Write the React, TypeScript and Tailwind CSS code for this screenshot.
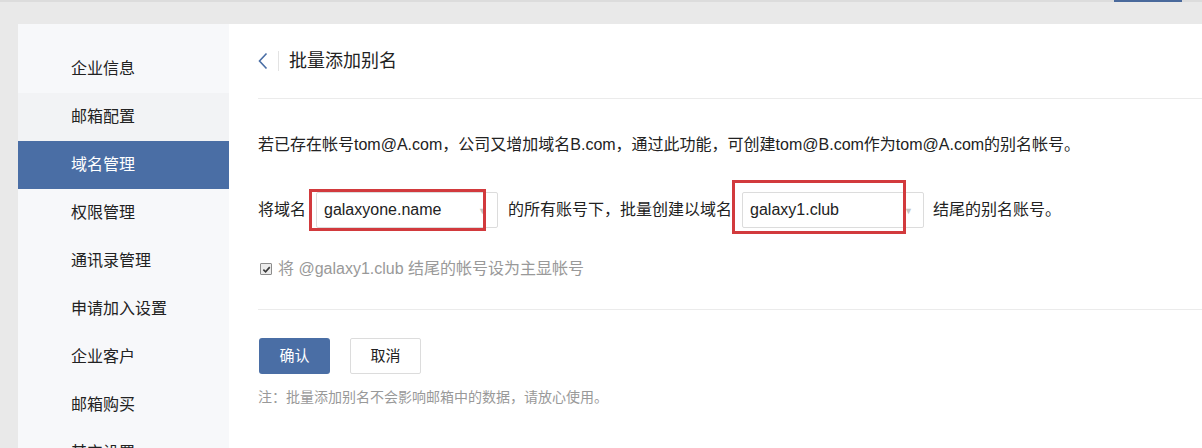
const menu = ['企业信息', '邮箱配置', '域名管理', '权限管理', '通讯录管理', '申请加入设置', '企业客户', '邮箱购买', '其它设置'];

function Select({ value, red }: { value: string; red: string }) {
  return (
    <div className="relative w-[182px] h-[36px] border border-[#dcdcdc] rounded-[2px] bg-white flex items-center pl-[7px]">
      <span className="text-[16px] text-[#222]">{value}</span>
      <span className="absolute right-[10px] top-[12px] text-[9px] text-[#c4c4c4]">▼</span>
      <div className={`absolute border-[3px] border-[#d23a3d] ${red}`} />
    </div>
  );
}

export default function App() {
  return (
    <div
      className="w-[1202px] h-[448px] overflow-hidden bg-[#e9e9e9] text-[#333]"
      style={{ fontFamily: '"Liberation Sans", "Noto Sans CJK SC", sans-serif' }}
    >
      <div className="h-[2px] bg-[#dcdcdc] flex justify-end">
        <div className="w-[68px] h-[2px] bg-[#4a6a9c] mr-[20px]" />
      </div>
      <div className="flex mt-[22px] ml-[18px] h-[430px]">
        {/* sidebar */}
        <div className="w-[211px] bg-[#f7f8fa] pt-[21px]">
          {menu.map((m, i) => (
            <div
              key={m}
              className={`h-[48px] flex items-center pl-[53px] text-[16px] ${
                i === 2 ? 'bg-[#4a6ea5] text-white' : i === 1 ? 'bg-[#f2f3f5] text-[#222]' : 'text-[#222]'
              }`}
            >
              {m}
            </div>
          ))}
        </div>

        {/* content */}
        <div className="flex-1 bg-white pl-[29px]">
          <div className="h-[75px] border-b border-[#ebebeb] flex items-center">
            <svg viewBox="0 0 10 18" className="w-[10px] h-[18px]">
              <path d="M8.5 1.5 L1.5 9 L8.5 16.5" fill="none" stroke="#4a6ea5" strokeWidth="1.6" />
            </svg>
            <div className="w-px h-[20px] bg-[#e3e3e3] ml-[10px] mr-[10px]" />
            <span className="text-[18px] text-[#222]">批量添加别名</span>
          </div>

          <p className="mt-[36px] text-[16px] leading-[20px] text-[#222]">
            若已存在帐号tom@A.com，公司又增加域名B.com，通过此功能，可创建tom@B.com作为tom@A.com的别名帐号。
          </p>

          <div className="mt-[37px] flex items-center text-[16px] text-[#222]">
            <span>将域名</span>
            <div className="ml-[10px]">
              <Select value="galaxyone.name" red="-left-[8px] -top-[4px] -bottom-[4px] right-[11px]" />
            </div>
            <span className="ml-[10px]">的所有账号下，批量创建以域名</span>
            <div className="ml-[10px]">
              <Select value="galaxy1.club" red="-left-[11px] -top-[13px] -bottom-[7px] right-[17px]" />
            </div>
            <span className="ml-[9px]">结尾的别名账号。</span>
          </div>

          <div className="mt-[31px] flex items-center text-[16px] text-[#999] leading-[20px]">
            <span className="w-[12px] h-[12px] ml-[2px] border border-[#8c8c8c] bg-[#ececec] rounded-[1px] flex items-center justify-center">
              <svg viewBox="0 0 10 10" className="w-[9px] h-[9px]">
                <path d="M1.5 5.2 L4 7.6 L8.6 2.4" fill="none" stroke="#3a3a3a" strokeWidth="1.8" />
              </svg>
            </span>
            <span className="ml-[6px]">将 @galaxy1.club 结尾的帐号设为主显帐号</span>
          </div>

          <div className="mt-[30px] border-t border-[#ebebeb]" />

          <div className="mt-[28px] flex gap-[20px] pl-px">
            <button className="w-[71px] h-[36px] bg-[#4a6ea5] text-white text-[15px] rounded-[3px]">确认</button>
            <button className="w-[71px] h-[36px] bg-white border border-[#dcdcdc] text-[#222] text-[15px] rounded-[2px]">
              取消
            </button>
          </div>

          <p className="mt-[14px] text-[14px] text-[#999] leading-[18px]">
            注：批量添加别名不会影响邮箱中的数据，请放心使用。
          </p>
        </div>
      </div>
    </div>
  );
}
